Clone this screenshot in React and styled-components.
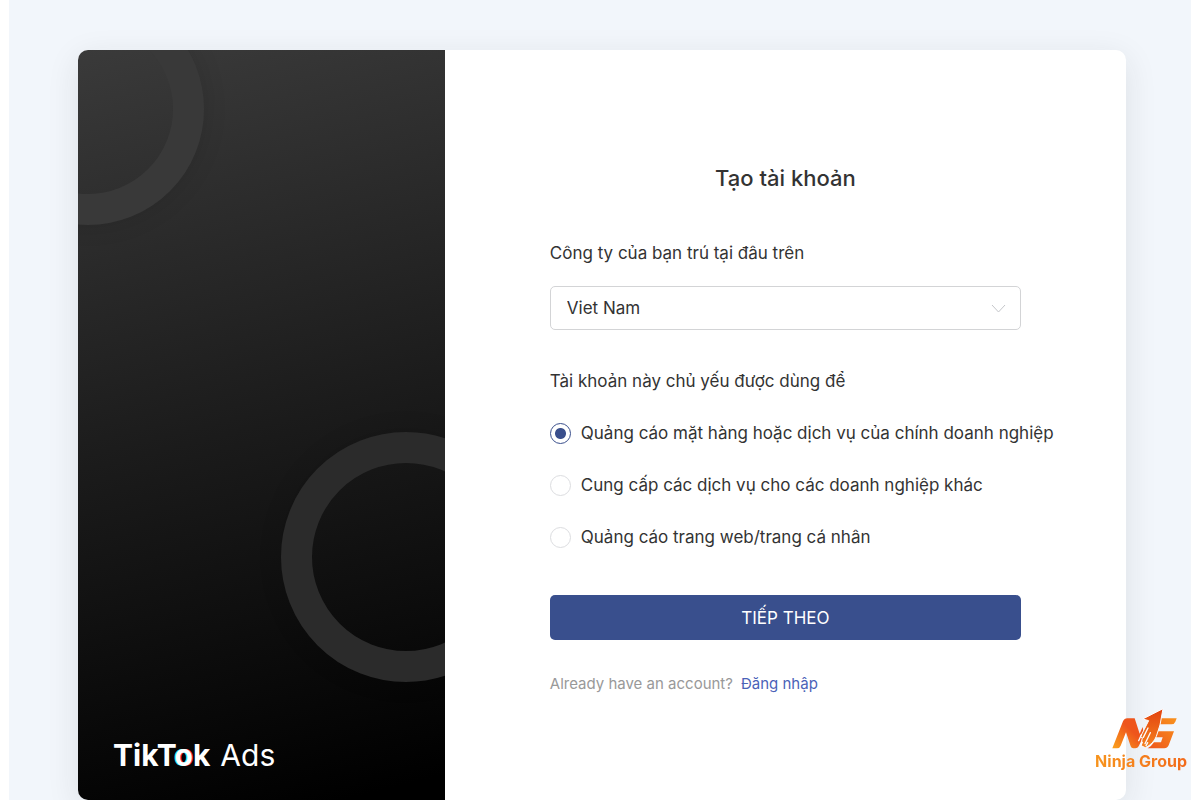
import { useState } from "react";
import styled, { createGlobalStyle, css } from "styled-components";

const GlobalStyles = createGlobalStyle`
  *,
  *::before,
  *::after {
    box-sizing: border-box;
  }

  body {
    margin: 0;
    background-color: #fff;
    color: #333;
    font-family: Inter, "Liberation Sans", sans-serif;
    font-size: 17px;
    line-height: 24px;
  }
`;

const Page = styled.main`
  min-height: 100vh;
  margin: 0 9px;
  padding: 50px 65px 0 69px;
  background-color: #f2f6fb;
`;

const Card = styled.div`
  display: grid;
  grid-template-columns: minmax(0, 35fr) minmax(0, 65fr);
  border-radius: 10px;
  overflow: hidden;
  background-color: #fff;
  box-shadow: 0 8px 32px rgba(40, 40, 40, 0.1);
`;

const Aside = styled.aside`
  position: relative;
  display: flex;
  align-items: flex-end;
  padding: 30px 35px;
  overflow: hidden;
  background: linear-gradient(166deg, #3a3a3a, #1b1b1b 50%, #000 97%);
`;

const Ring = styled.span`
  position: absolute;
  border-style: solid;
  border-width: 31px;
  border-radius: 50%;
  box-shadow: 0 0 24px rgba(0, 0, 0, 0.12);

  ${({ $place }) =>
    $place === "top"
      ? css`
          top: -57px;
          left: -106px;
          width: 232px;
          height: 232px;
          border-color: #393939;
        `
      : css`
          top: 382px;
          right: -86px;
          width: 250px;
          height: 250px;
          border-color: #2b2b2b;
        `}
`;

const Brand = styled.div`
  display: flex;
  gap: 10px;
  color: #fff;
  font-size: 30px;
  line-height: 30px;
`;

const BrandName = styled.span`
  font-weight: 700;
`;

const BrandO = styled.span`
  text-shadow: -1px 0 #25f4ee, 1px 0 #fe2c55;
`;

const Form = styled.form`
  display: flex;
  flex-direction: column;
  padding: 112px 105px 104px;
`;

const Title = styled.h1`
  margin: 0 0 47px;
  font-size: 22px;
  font-weight: 500;
  line-height: 32px;
  text-align: center;
`;

const Label = styled.label`
  margin-bottom: 21px;
`;

const SelectBox = styled.div`
  position: relative;
  margin-bottom: 39px;
`;

const Select = styled.select`
  display: block;
  width: 100%;
  height: 44px;
  padding: 0 40px 0 16px;
  border: 1px solid #d3d4d6;
  border-radius: 5px;
  appearance: none;
  background-color: #fff;
  color: inherit;
  font: inherit;
`;

const Chevron = styled.svg`
  position: absolute;
  top: 18px;
  right: 15px;
  width: 15px;
  height: 10px;
  fill: none;
  stroke: #c4c6ca;
  pointer-events: none;
`;

const Options = styled.fieldset`
  display: flex;
  flex-direction: column;
  gap: 28px;
  min-width: 0;
  margin: 0 0 46px;
  padding: 0;
  border: none;
`;

const Legend = styled.legend`
  margin-bottom: 28px;
  padding: 0;
`;

const Option = styled.label`
  display: flex;
  align-items: center;
  gap: 10px;
  white-space: nowrap;
`;

const Radio = styled.input`
  flex: none;
  width: 21px;
  height: 21px;
  margin: 0;
  border: 1px solid #dcdde0;
  border-radius: 50%;
  appearance: none;
  background-color: #fff;

  &:checked {
    border-color: #3a4f8c;
    background: radial-gradient(circle, #3a4f8c 5px, #fff 6px);
  }
`;

const Button = styled.button`
  height: 45px;
  margin-bottom: 32px;
  padding: 0;
  border: none;
  border-radius: 5px;
  background-color: #394f8d;
  color: #fff;
  font: inherit;
  cursor: pointer;
`;

const Footer = styled.p`
  display: flex;
  gap: 8px;
  margin: 0;
  color: #999;
  font-size: 15px;
`;

const Link = styled.a`
  color: #4a62b8;
  text-decoration: none;
`;

const Watermark = styled.div`
  position: fixed;
  right: 13px;
  bottom: 28px;
  display: flex;
  flex-direction: column;
  align-items: center;
`;

const WatermarkLogo = styled.svg`
  width: 78px;
  height: 45px;
`;

const WatermarkName = styled.span`
  background: linear-gradient(90deg, #f7941d, #f26a1b);
  background-clip: text;
  color: transparent;
  font-size: 16px;
  font-weight: 700;
  line-height: 22px;
`;

const purposes = [
  {
    value: "own",
    label: "Quảng cáo mặt hàng hoặc dịch vụ của chính doanh nghiệp",
  },
  { value: "agency", label: "Cung cấp các dịch vụ cho các doanh nghiệp khác" },
  { value: "personal", label: "Quảng cáo trang web/trang cá nhân" },
];

function NinjaGroup() {
  return (
    <Watermark>
      <WatermarkLogo viewBox="-18 0 234 135" aria-hidden="true">
        <defs>
          <linearGradient id="ninja-n" x1="0" y1="1" x2="1" y2="0">
            <stop offset="0" stopColor="#fba31c" />
            <stop offset="0.6" stopColor="#ee551c" />
          </linearGradient>
          <linearGradient id="ninja-arrow" x1="0" y1="1" x2="0" y2="0">
            <stop offset="0" stopColor="#f5821f" />
            <stop offset="1" stopColor="#e2420f" />
          </linearGradient>
          <linearGradient id="ninja-g" x1="0" y1="1" x2="1" y2="0">
            <stop offset="0" stopColor="#ee551c" />
            <stop offset="1" stopColor="#f9921d" />
          </linearGradient>
        </defs>
        <path
          fill="url(#ninja-n)"
          d="M13 130 45 49Q49 40 58 40H80L95 86 104 66 108 90 92 124Q89 130 82 130H76Q70 130 68 124L54 82 38 122Q35 130 27 130Z"
        />
        <path
          fill="url(#ninja-g)"
          d="M157 40H206L202 50Q199 58 190 58H154L146 79H198L182 121Q178 130 169 130H119Q131 123 138 112H159L164 97H142L149 40Z"
        />
        <path
          fill="url(#ninja-arrow)"
          stroke="#fbfcfe"
          strokeWidth="3"
          d="M104 42 165 11 156 60 145 94Q136 117 112 128L99 122 103 98 97 96 122 47Z"
        />
        <path
          fill="none"
          stroke="#fbfcfe"
          strokeWidth="4"
          strokeLinecap="round"
          d="M120 69 106 97M127 83 111 116M100 89 92 107M103 112 98 123M119 113 114 122"
        />
      </WatermarkLogo>
      <WatermarkName>Ninja Group</WatermarkName>
    </Watermark>
  );
}

function App() {
  const [country, setCountry] = useState("VN");
  const [purpose, setPurpose] = useState("own");

  return (
    <>
      <GlobalStyles />
      <Page>
        <Card>
          <Aside>
            <Ring $place="top" />
            <Ring $place="bottom" />
            <Brand>
              <BrandName>
                TikT<BrandO>o</BrandO>k
              </BrandName>
              <span>Ads</span>
            </Brand>
          </Aside>
          <Form onSubmit={(e) => e.preventDefault()}>
            <Title>Tạo tài khoản</Title>
            <Label htmlFor="country">Công ty của bạn trú tại đâu trên</Label>
            <SelectBox>
              <Select
                id="country"
                value={country}
                onChange={(e) => setCountry(e.target.value)}
              >
                <option value="VN">Viet Nam</option>
              </Select>
              <Chevron viewBox="0 0 15 10">
                <path d="M1 1 7.5 8 14 1" />
              </Chevron>
            </SelectBox>
            <Options>
              <Legend>Tài khoản này chủ yếu được dùng để</Legend>
              {purposes.map(({ value, label }) => (
                <Option key={value}>
                  <Radio
                    type="radio"
                    name="purpose"
                    value={value}
                    checked={purpose === value}
                    onChange={() => setPurpose(value)}
                  />
                  {label}
                </Option>
              ))}
            </Options>
            <Button type="submit">TIẾP THEO</Button>
            <Footer>
              Already have an account? <Link href="#login">Đăng nhập</Link>
            </Footer>
          </Form>
        </Card>
      </Page>
      <NinjaGroup />
    </>
  );
}

export default App;
